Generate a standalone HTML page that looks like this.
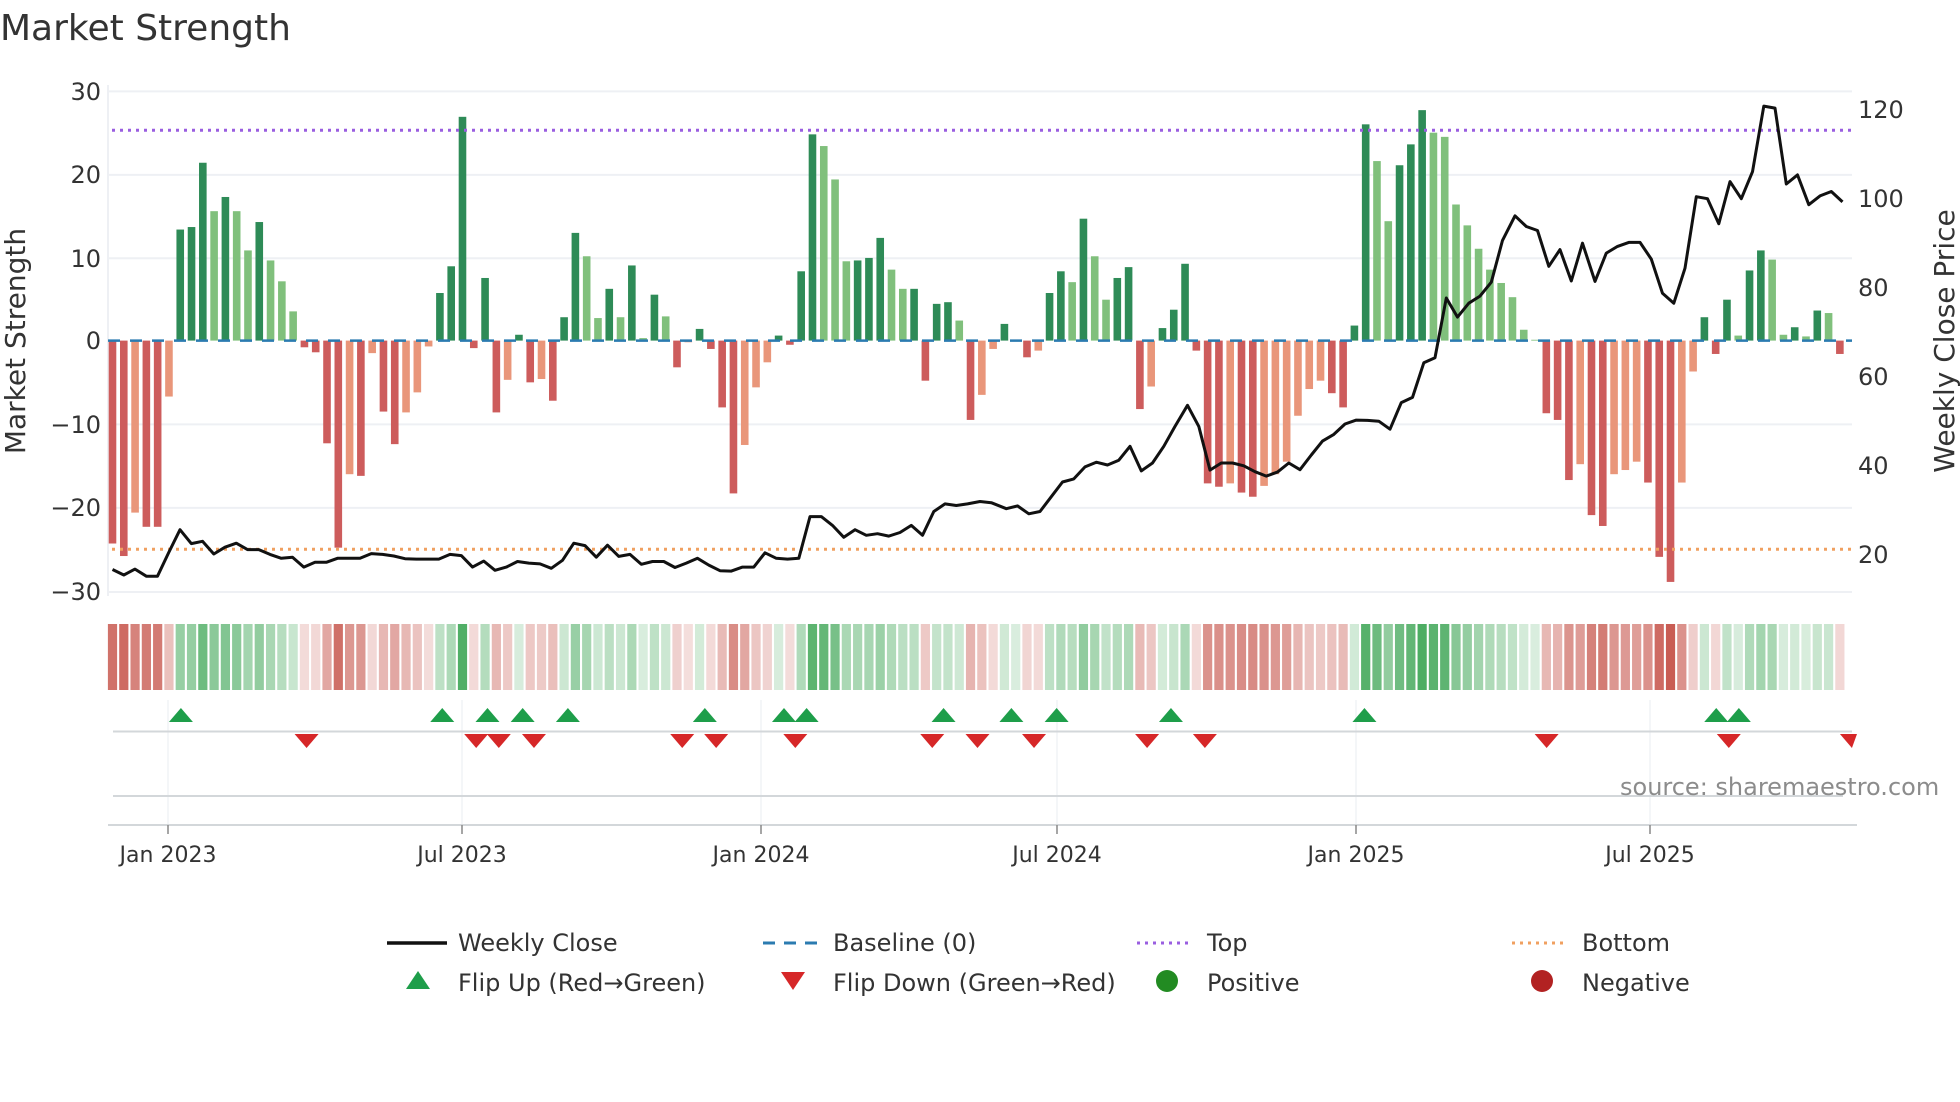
<!DOCTYPE html>
<html><head><meta charset="utf-8"><style>
html,body{margin:0;padding:0;background:#fff;width:1960px;height:1102px;overflow:hidden}
svg{display:block;font-family:"DejaVu Sans","Liberation Sans",sans-serif}
</style></head><body>
<svg id="s" width="1960" height="1102" viewBox="0 0 1960 1102" xmlns="http://www.w3.org/2000/svg">
<rect width="1960" height="1102" fill="#fff"/>
<text x="0" y="40" font-size="36" fill="#333">Market Strength</text>
<g stroke="#eef0f4" stroke-width="2">
<line x1="108" x2="1852" y1="91.4" y2="91.4"/><line x1="108" x2="1852" y1="174.9" y2="174.9"/>
<line x1="108" x2="1852" y1="258.3" y2="258.3"/><line x1="108" x2="1852" y1="424.4" y2="424.4"/>
<line x1="108" x2="1852" y1="507.9" y2="507.9"/><line x1="108" x2="1852" y1="592" y2="592"/>
<line x1="108" x2="108" y1="85" y2="596"/>
</g>
<g font-size="24" fill="#333" text-anchor="end">
<text x="101" y="100">30</text><text x="101" y="183">20</text><text x="101" y="267">10</text>
<text x="101" y="349">0</text><text x="101" y="433">−10</text><text x="101" y="516">−20</text><text x="101" y="600">−30</text>
</g>
<g font-size="24" fill="#333">
<text x="1858" y="118">120</text><text x="1858" y="207">100</text><text x="1858" y="296">80</text>
<text x="1858" y="385">60</text><text x="1858" y="474">40</text><text x="1858" y="563">20</text>
</g>
<text transform="translate(25,341) rotate(-90)" font-size="28" fill="#333" text-anchor="middle">Market Strength</text>
<text transform="translate(1954,341) rotate(-90)" font-size="28" fill="#333" text-anchor="middle">Weekly Close Price</text>
<g id="bars"></g>
<line x1="108" x2="1852" y1="340.6" y2="340.6" stroke="#2b7bb0" stroke-width="2.5" stroke-dasharray="12,10"/>
<line x1="112" x2="1852" y1="130.3" y2="130.3" stroke="#9a5ee0" stroke-width="3" stroke-dasharray="3,5"/>
<line x1="112" x2="1852" y1="549.2" y2="549.2" stroke="#f0a060" stroke-width="3" stroke-dasharray="3,5"/>
<polyline id="price" fill="none" stroke="#111" stroke-width="3" stroke-linejoin="round"/>
<g id="heat"></g>
<g stroke="#f0f2f5" stroke-width="1.5">
<line x1="168" x2="168" y1="700" y2="827"/><line x1="462" x2="462" y1="700" y2="827"/>
<line x1="761" x2="761" y1="700" y2="827"/><line x1="1057" x2="1057" y1="700" y2="827"/>
<line x1="1356" x2="1356" y1="700" y2="827"/><line x1="1650" x2="1650" y1="700" y2="827"/>
</g>
<line x1="113" x2="1852" y1="731.5" y2="731.5" stroke="#d3d7da" stroke-width="2"/>
<line x1="113" x2="1843" y1="796" y2="796" stroke="#d3d7da" stroke-width="2"/>
<line x1="108" x2="1857" y1="825" y2="825" stroke="#d3d7da" stroke-width="2"/>
<g id="tri"></g>
<g stroke="#888" stroke-width="1.5">
<line x1="168" x2="168" y1="825" y2="834"/><line x1="462" x2="462" y1="825" y2="834"/>
<line x1="761" x2="761" y1="825" y2="834"/><line x1="1057" x2="1057" y1="825" y2="834"/>
<line x1="1356" x2="1356" y1="825" y2="834"/><line x1="1650" x2="1650" y1="825" y2="834"/>
</g>
<g font-size="22" fill="#333" text-anchor="middle">
<text x="168" y="862">Jan 2023</text><text x="462" y="862">Jul 2023</text><text x="761" y="862">Jan 2024</text>
<text x="1057" y="862">Jul 2024</text><text x="1356" y="862">Jan 2025</text><text x="1650" y="862">Jul 2025</text>
</g>
<text x="1620" y="795" font-size="24" fill="#8c8c8c">source: sharemaestro.com</text>
<g font-size="24" fill="#333">
<line x1="387" x2="447" y1="943" y2="943" stroke="#111" stroke-width="3.5"/>
<text x="458" y="951">Weekly Close</text>
<line x1="763" x2="817" y1="943" y2="943" stroke="#2b7bb0" stroke-width="3" stroke-dasharray="12,9"/>
<text x="833" y="951">Baseline (0)</text>
<line x1="1137" x2="1191" y1="943" y2="943" stroke="#9a5ee0" stroke-width="3" stroke-dasharray="3,5"/>
<text x="1207" y="951">Top</text>
<line x1="1512" x2="1566" y1="943" y2="943" stroke="#f0a060" stroke-width="3" stroke-dasharray="3,5"/>
<text x="1582" y="951">Bottom</text>
<polygon points="406,989 430,989 418,971" fill="#1e9e4a"/>
<text x="458" y="991">Flip Up (Red→Green)</text>
<polygon points="781,972 805,972 793,990" fill="#d62728"/>
<text x="833" y="991">Flip Down (Green→Red)</text>
<circle cx="1167" cy="981" r="11" fill="#228b22"/>
<text x="1207" y="991">Positive</text>
<circle cx="1542" cy="981" r="11" fill="#b22222"/>
<text x="1582" y="991">Negative</text>
</g>
</svg>
<script>
var V="-24.3d -25.8d -20.6l -22.3d -22.3d -6.7l 13.3d 13.6d 21.3d 15.5l 17.2d 15.5l 10.8l 14.2d 9.6l 7.1l 3.5l -0.8d -1.4d -12.3d -24.8d -16l -16.2d -1.5l -8.5d -12.4d -8.6l -6.2l -0.7l 5.7d 8.9d 26.8d -0.9d 7.5d -8.6d -4.7l 0.7d -5d -4.6l -7.2d 2.8d 12.9d 10.1l 2.7l 6.2d 2.8l 9d 0.3l 5.5d 2.9l -3.2d -0.2l 1.4d -1d -8d -18.3d -12.5l -5.6l -2.6l 0.6d -0.5d 8.3d 24.7d 23.3l 19.3l 9.5l 9.6d 9.9d 12.3d 8.5l 6.2l 6.2d -4.8d 4.4d 4.6d 2.4l -9.5d -6.5l -1l 2d 0.1d -2d -1.2l 5.7d 8.3d 7l 14.6d 10.1l 4.9l 7.5d 8.8d -8.2d -5.5l 1.5d 3.7d 9.2d -1.2d -17.1d -17.5d -17.1l -18.2d -18.7d -17.4l -16l -14.5l -9l -5.8l -4.8l -6.3d -8d 1.8d 25.9d 21.5l 14.3l 21d 23.5d 27.6d 24.9l 24.4l 16.3l 13.8l 11l 8.5l 6.9l 5.2l 1.3l 0.1l -8.7d -9.5d -16.7d -14.8l -20.9d -22.2d -16l -15.5l -14.5l -17d -25.9d -28.9d -17l -3.7l 2.8d -1.6d 4.9d 0.6l 8.4d 10.8d 9.7l 0.7l 1.6d 0.5l 3.6d 3.3l -1.6d".split(" ");
var NS="http://www.w3.org/2000/svg",bars=document.getElementById("bars"),heat=document.getElementById("heat");
function el(t,a,p){var e=document.createElementNS(NS,t);for(var k in a)e.setAttribute(k,a[k]);p.appendChild(e);return e;}
for(var i=0;i<V.length;i++){var s=V[i],v=parseFloat(s),d=s.slice(-1)=="d",x=112.5+i*11.29;
var c=v>=0?(d?"#2e8b57":"#80c07c"):(d?"#cd5c5c":"#e9967a");
var y0=340.6,y1=340.6-v*8.35;el("rect",{x:x-3.8,y:Math.min(y0,y1),width:7.6,height:Math.max(0.8,Math.abs(y1-y0)),fill:c},bars);
var a=0.18+0.72*Math.min(Math.abs(v),29)/29;var col=v>=0?"rgba(50,160,75,"+a+")":"rgba(195,75,65,"+a+")";
el("rect",{x:x-4.6,y:624,width:9.2,height:66,fill:col},heat);}
var P1=[[180,1433],[198,1447],[216,1432],[234,1450],[252,1450],[270,1390],[288,1333],[306,1368],[324,1362],[342,1394],[360,1377],[378,1367],[396,1383],[414,1383],[432,1395],[450,1405],[468,1402],[486,1427],[504,1415],[522,1415],[540,1405],[558,1405],[576,1405],[594,1393],[612,1395],[630,1399],[648,1406],[666,1407],[684,1407],[702,1407],[720,1395],[738,1398],[756,1427],[774,1412],[792,1435],[810,1427],[828,1413],[846,1417],[864,1419],[882,1430],[900,1410],[918,1367],[936,1373],[954,1402],[972,1372],[990,1400],[1008,1395],[1026,1420],[1044,1413],[1062,1413],[1080,1428],[1098,1417],[1116,1405],[1134,1422],[1152,1436],[1170,1437],[1188,1427],[1206,1427],[1224,1391],[1242,1405],[1260,1407],[1278,1405],[1296,1300],[1314,1300],[1332,1322],[1350,1352],[1368,1333],[1386,1347],[1404,1343],[1422,1349],[1440,1340],[1458,1322],[1476,1347],[1494,1287],[1512,1268],[1530,1272],[1548,1268]];
var P2=[[0,1262],[18,1265],[42,1280],[60,1273],[78,1293],[96,1287],[114,1250],[132,1213],[150,1205],[168,1175],[186,1163],[204,1170],[222,1158],[240,1123],[258,1185],[276,1165],[294,1123],[312,1073],[332,1020],[350,1073],[368,1183],[386,1165],[404,1165],[422,1172],[440,1187],[458,1198],[476,1188],[494,1165],[512,1182],[530,1145],[548,1110],[566,1093],[584,1067],[602,1057],[620,1058],[638,1060],[656,1080],[674,1013],[692,1000],[710,913],[728,900],[746,750],[764,798],[782,763],[800,745],[818,710],[836,605],[856,543],[874,570],[892,580],[910,670],[928,628],[946,707],[964,612],[984,708],[1002,637],[1020,620],[1038,610],[1056,610],[1074,652],[1092,738],[1110,763],[1128,675],[1146,495],[1164,500],[1182,563],[1200,457],[1218,500],[1236,432],[1254,267],[1272,272],[1290,463],[1308,440],[1326,515],[1344,493],[1362,482],[1380,508]];
var pts=P1.map(function(p){return (p[0]*0.625).toFixed(1)+","+(p[1]*0.3974).toFixed(1)}).concat(P2.map(function(p){return (980+p[0]*0.625).toFixed(1)+","+(p[1]*0.3974).toFixed(1)}));
document.getElementById("price").setAttribute("points",pts.join(" "));
var tri=document.getElementById("tri"),k=1.2564;
[144,352,388,416,452,561,624,642,751,805,841,932,1086,1366,1384].forEach(function(x){x*=k;el("polygon",{points:(x-12)+",722 "+(x+12)+",722 "+x+",708",fill:"#1e9e4a"},tri);});
[244,379,397,425,543,570,633,742,778,823,913,959,1231,1376,1474].forEach(function(x){x*=k;var r=Math.min(x+12,1857);el("polygon",{points:(x-12)+",734 "+r+",734 "+Math.min(x,1857)+",748",fill:"#d62728"},tri);});
</script>
</body></html>
